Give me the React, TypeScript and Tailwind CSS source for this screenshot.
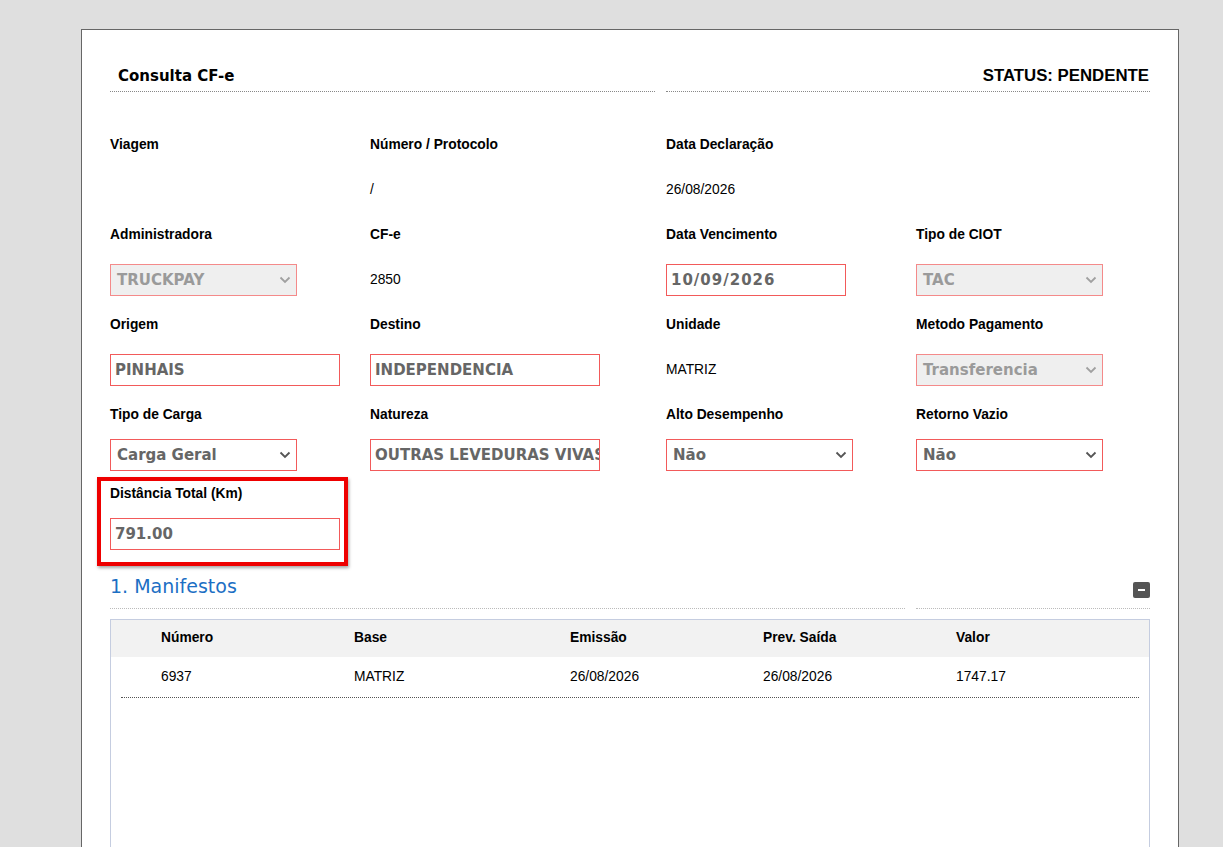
import type { ReactNode } from "react";

const sans = "font-['Liberation_Sans',Arial,sans-serif]";
const verdana = "font-['DejaVu_Sans',Verdana,sans-serif]";

function Chevron({ muted }: { muted?: boolean }) {
  return (
    <svg width="12" height="8" viewBox="0 0 12 8" className="shrink-0">
      <path
        d="M1.5 1.5 L6 6 L10.5 1.5"
        fill="none"
        stroke={muted ? "#a0a0a0" : "#555"}
        strokeWidth="1.8"
      />
    </svg>
  );
}

function Label({ children }: { children: ReactNode }) {
  return <div className={`${sans} h-5 text-[13.8px] leading-5 font-bold text-black`}>{children}</div>;
}

function Value({ children }: { children: ReactNode }) {
  return (
    <div className={`${sans} flex h-8 items-center text-[13.8px] text-black`}>{children}</div>
  );
}

function TextBox({ value, w, track }: { value: string; w: string; track?: boolean }) {
  return (
    <div
      className={`${verdana} ${w} ${track ? "tracking-[1px]" : ""} flex h-8 items-center overflow-hidden whitespace-nowrap border border-[#f25a5a] bg-white pl-[4px] text-[15px] font-bold text-[#666]`}
    >
      {value}
    </div>
  );
}

function Select({ value, disabled }: { value: string; disabled?: boolean }) {
  return (
    <div
      className={`${verdana} flex h-8 w-[187px] items-center justify-between border pr-[5px] pl-[6px] text-[15px] font-bold ${
        disabled
          ? "border-[#f48a8a] bg-[#efefef] text-[#9a9a9a]"
          : "border-[#f25a5a] bg-white text-[#666]"
      }`}
    >
      <span>{value}</span>
      <Chevron muted={disabled} />
    </div>
  );
}

function Field({ label, children, gap = "mt-[19px]" }: { label: string; children: ReactNode; gap?: string }) {
  return (
    <div className="flex flex-col">
      <Label>{label}</Label>
      <div className={gap}>{children}</div>
    </div>
  );
}

export default function App() {
  const cols = "grid grid-cols-[260px_296px_250px_1fr]";
  return (
    <div className="min-h-screen bg-[#dfdfdf] pt-[29px]">
      <div className="ml-[81px] w-[1098px] border border-b-0 border-[#666] bg-white px-[28px] pt-[33px]">
        {/* header */}
        <div className="flex">
          <div className="mr-[11px] w-[545px] border-b border-dotted border-[#888] pb-[3px] pl-[8px]">
            <span className={`${verdana} text-[15px] leading-[24px] font-bold text-black`}>
              Consulta CF-e
            </span>
          </div>
          <div className="flex-1 border-b border-dotted border-[#888] pr-[1px] pb-[3px] text-right">
            <span className={`${sans} text-[16.8px] leading-[24px] font-bold text-black`}>
              STATUS: PENDENTE
            </span>
          </div>
        </div>

        {/* form */}
        <div className={`${cols} mt-[43px] gap-y-[19px]`}>
          <Field label="Viagem">
            <Value>{""}</Value>
          </Field>
          <Field label="Número / Protocolo">
            <Value>/</Value>
          </Field>
          <Field label="Data Declaração">
            <Value>26/08/2026</Value>
          </Field>
          <div />

          <Field label="Administradora">
            <Select value="TRUCKPAY" disabled />
          </Field>
          <Field label="CF-e">
            <Value>2850</Value>
          </Field>
          <Field label="Data Vencimento">
            <TextBox value="10/09/2026" w="w-[180px]" track />
          </Field>
          <Field label="Tipo de CIOT">
            <Select value="TAC" disabled />
          </Field>

          <Field label="Origem">
            <TextBox value="PINHAIS" w="w-[230px]" />
          </Field>
          <Field label="Destino">
            <TextBox value="INDEPENDENCIA" w="w-[230px]" />
          </Field>
          <Field label="Unidade">
            <Value>MATRIZ</Value>
          </Field>
          <Field label="Metodo Pagamento">
            <Select value="Transferencia" disabled />
          </Field>
        </div>

        <div className={`${cols} mt-[19px] gap-y-[13px]`}>
          <Field label="Tipo de Carga" gap="mt-[14px]">
            <Select value="Carga Geral" />
          </Field>
          <Field label="Natureza" gap="mt-[14px]">
            <TextBox value="OUTRAS LEVEDURAS VIVAS" w="w-[230px]" />
          </Field>
          <Field label="Alto Desempenho" gap="mt-[14px]">
            <Select value="Não" />
          </Field>
          <Field label="Retorno Vazio" gap="mt-[14px]">
            <Select value="Não" />
          </Field>

          <div className="relative">
            <Field label="Distância Total (Km)" gap="mt-[14px]">
              <TextBox value="791.00" w="w-[230px]" />
            </Field>
            <div className="pointer-events-none absolute -top-[7px] -bottom-[16px] -left-[13px] right-[22px] border-[4px] border-[#ee0000] shadow-[1px_2px_3px_rgba(0,0,0,0.35)]" />
          </div>
        </div>

        {/* manifestos */}
        <div className="mt-[24px] flex">
          <div className="mr-[11px] w-[795px] border-b border-dotted border-[#bbb] pb-[9px]">
            <span className={`${verdana} text-[19px] leading-[24px] text-[#1c6fc4]`}>1. Manifestos</span>
          </div>
          <div className="flex flex-1 items-end justify-end border-b border-dotted border-[#bbb] pb-[9px]">
            <div className="mb-[1px] flex h-[16px] w-[17px] items-center justify-center rounded-[2px] bg-[#555]">
              <div className="h-[2px] w-[7px] bg-white" />
            </div>
          </div>
        </div>

        <div className={`${sans} mt-[10px] h-[400px] border border-[#c5cde0] text-[13.8px]`}>
          <div className="grid h-[37px] grid-cols-[193px_216px_193px_193px_1fr] items-center bg-[#f2f2f2] pl-[50px] font-bold text-black">
            <div>Número</div>
            <div>Base</div>
            <div>Emissão</div>
            <div>Prev. Saída</div>
            <div>Valor</div>
          </div>
          <div className="mx-[10px] border-b border-dotted border-[#555]">
            <div className="grid h-[40px] grid-cols-[193px_216px_193px_193px_1fr] items-center pl-[40px] text-black">
              <div>6937</div>
              <div>MATRIZ</div>
              <div>26/08/2026</div>
              <div>26/08/2026</div>
              <div>1747.17</div>
            </div>
          </div>
        </div>
      </div>
    </div>
  );
}
